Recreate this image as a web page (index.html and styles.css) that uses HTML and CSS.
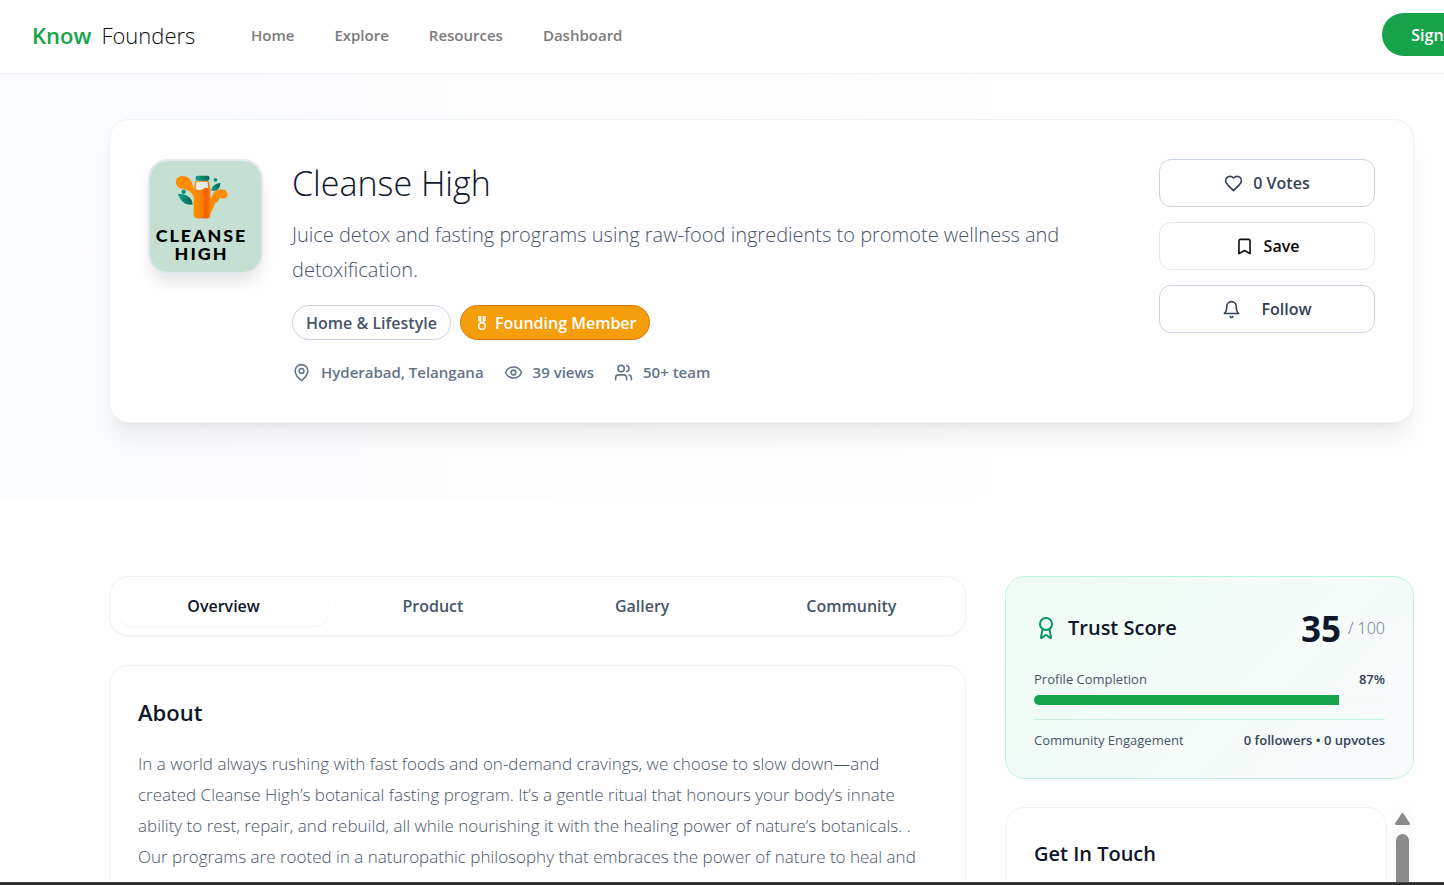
FILE: index.html
```html
<!DOCTYPE html>
<html lang="en">
<head>
  <meta charset="UTF-8">
  <meta name="viewport" content="width=device-width, initial-scale=1.0">
  <title>Cleanse High - Know Founders</title>
  <link rel="stylesheet" href="styles.css">
</head>
<body>
  <header class="navbar">
    <a class="brand" href="#"><span class="brand-know">Know</span> <span>Founders</span></a>
    <nav class="nav-links">
      <a href="#">Home</a>
      <a href="#">Explore</a>
      <a href="#">Resources</a>
      <a href="#">Dashboard</a>
    </nav>
    <button class="sign-in">Sign In</button>
  </header>

  <main>
    <section class="hero">
      <div class="hero-card">
        <svg class="logo" viewBox="0 0 112 112" role="img" aria-label="Cleanse High logo">
          <defs>
            <linearGradient id="juice">
              <stop offset="0" stop-color="#ff9100"/>
              <stop offset="0.5" stop-color="#fb7d00"/>
              <stop offset="0.75" stop-color="#f05a00"/>
              <stop offset="1" stop-color="#fb8500"/>
            </linearGradient>
            <linearGradient id="leaf">
              <stop offset="0" stop-color="#14a085"/>
              <stop offset="1" stop-color="#046657"/>
            </linearGradient>
          </defs>
          <rect width="112" height="112" fill="#c5dfd2"/>
          <path d="M45 38C43 32 39 29 33 28C28 28 26 24 26 20C27 16 32 14 37 16C43 19 43 26 46 34Z" fill="#ff8c00"/>
          <path d="M60 38C65 35 63 30 69 29C75 27 79 31 78 35C77 38 73 38 71 37C69 38 70 41 66 42C64 45 64 50 60 53Z" fill="#ff8c00"/>
          <path d="M46 20H59L61 28V54Q61 58 57 58H48Q44 58 44 54V28Z" fill="url(#juice)"/>
          <path d="M47 21H58L59 28Q56 26 54 28Q50 31 46 28Z" fill="#e5eee6"/>
          <rect x="46" y="15" width="14" height="5" rx="2" fill="url(#leaf)"/>
          <path d="M28 33C35 33 43 36 43 44C36 45 31 41 28 33Z" fill="url(#leaf)"/>
          <path d="M62 30C62 25 66 23 71 22C71 27 68 31 62 30Z" fill="url(#leaf)"/>
          <circle cx="34" cy="31" r="2.2" fill="#0c9079"/>
          <circle cx="66" cy="19" r="1.9" fill="#0c9079"/>
          <text class="logo-text" x="52" y="82">CLEANSE</text>
          <text class="logo-text" x="52" y="100">HIGH</text>
        </svg>

        <div class="startup">
          <h1>Cleanse High</h1>
          <p class="tagline">Juice detox and fasting programs using raw-food ingredients to promote wellness and detoxification.</p>
          <div class="badges">
            <span class="badge">Home &amp; Lifestyle</span>
            <span class="badge badge-founding">
              <svg class="medal" viewBox="0 0 10 16" fill="none" stroke="#fff"><path d="M1 1h8v5L5 8L1 6Z" fill="#fff" fill-opacity=".8" stroke="none"/><path d="M5 1v6" stroke="#f59e0b"/><circle cx="5" cy="11" r="3.3" stroke-width="1.5"/></svg>
              Founding Member
            </span>
          </div>
          <ul class="meta">
            <li>
              <svg class="icon" viewBox="0 0 24 24"><path d="M20 10c0 4.993-5.539 10.193-7.399 11.799a1 1 0 0 1-1.202 0C9.539 20.193 4 14.993 4 10a8 8 0 0 1 16 0"/><circle cx="12" cy="10" r="3"/></svg>
              Hyderabad, Telangana
            </li>
            <li>
              <svg class="icon" viewBox="0 0 24 24"><path d="M2.062 12.348a1 1 0 0 1 0-.696 10.75 10.75 0 0 1 19.876 0 1 1 0 0 1 0 .696 10.75 10.75 0 0 1-19.876 0"/><circle cx="12" cy="12" r="3"/></svg>
              39 views
            </li>
            <li>
              <svg class="icon" viewBox="0 0 24 24"><path d="M16 21v-2a4 4 0 0 0-4-4H6a4 4 0 0 0-4 4v2"/><circle cx="9" cy="7" r="4"/><path d="M22 21v-2a4 4 0 0 0-3-3.87M16 3.13a4 4 0 0 1 0 7.75"/></svg>
              50+ team
            </li>
          </ul>
        </div>

        <div class="actions">
          <button class="action">
            <svg class="icon" viewBox="0 0 24 24"><path d="M19 14c1.49-1.46 3-3.21 3-5.5A5.5 5.5 0 0 0 16.5 3c-1.76 0-3 .5-4.5 2-1.5-1.5-2.74-2-4.5-2A5.5 5.5 0 0 0 2 8.5c0 2.3 1.5 4.05 3 5.5l7 7Z"/></svg>
            0 Votes
          </button>
          <button class="action action-save">
            <svg class="icon" viewBox="0 0 24 24"><path d="m19 21-7-4-7 4V5a2 2 0 0 1 2-2h10a2 2 0 0 1 2 2v16z"/></svg>
            Save
          </button>
          <button class="action action-follow">
            <svg class="icon" viewBox="0 0 24 24"><path d="M6 8a6 6 0 0 1 12 0c0 7 3 9 3 9H3s3-2 3-9"/><path d="M10.3 21a1.94 1.94 0 0 0 3.4 0"/></svg>
            Follow
          </button>
        </div>
      </div>
    </section>

    <div class="content">
      <div class="main-column">
        <div class="tabs" role="tablist">
          <button class="tab active" role="tab" aria-selected="true">Overview</button>
          <button class="tab" role="tab">Product</button>
          <button class="tab" role="tab">Gallery</button>
          <button class="tab" role="tab">Community</button>
        </div>
        <section class="card">
          <h2>About</h2>
          <p class="about-text">In a world always rushing with fast foods and on-demand cravings, we choose to slow down—and<br>created Cleanse High’s botanical fasting program. It’s a gentle ritual that honours your body’s innate<br>ability to rest, repair, and rebuild, all while nourishing it with the healing power of nature’s botanicals. .<br>Our programs are rooted in a naturopathic philosophy that embraces the power of nature to heal and<br>restore. We believe the body has an incredible capacity to restore itself when put in a fasting state and</p>
        </section>
      </div>

      <aside class="sidebar">
        <section class="trust">
          <div class="trust-head">
            <svg class="icon award" viewBox="0 0 24 24"><path d="m15.477 12.89 1.515 8.526a.5.5 0 0 1-.81.47l-3.58-2.687a1 1 0 0 0-1.197 0l-3.586 2.686a.5.5 0 0 1-.81-.469l1.514-8.526"/><circle cx="12" cy="8" r="6"/></svg>
            <h2>Trust Score</h2>
            <strong>35</strong>
            <span class="out-of">/ 100</span>
          </div>
          <div class="trust-row"><span>Profile Completion</span><b>87%</b></div>
          <div class="progress"><div class="progress-fill" style="width: 87%"></div></div>
          <div class="trust-row engagement"><span>Community Engagement</span><b>0 followers • 0 upvotes</b></div>
        </section>
        <div class="contact-scroll">
          <section class="card">
            <h2>Get In Touch</h2>
          </section>
          <div class="scrollbar">
            <svg viewBox="0 0 14 11"><path d="M7 1L13 10H1Z" fill="#8b8b8b" stroke="#8b8b8b" stroke-width="2" stroke-linejoin="round"/></svg>
            <div class="thumb"></div>
          </div>
        </div>
      </aside>
    </div>
  </main>
  <div class="bottom-edge"></div>
</body>
</html>
```
FILE: styles.css
```css
* {
  box-sizing: border-box;
}

body {
  margin: 0;
  height: 100vh;
  display: flex;
  flex-direction: column;
  overflow: hidden;
  font-family: "Open Sans", "Noto Sans", sans-serif;
  font-size: 16px;
  color: #0f172a;
  background: #fefefe;
}

h1, h2, p, ul {
  margin: 0;
  padding: 0;
}

button {
  font: inherit;
  cursor: pointer;
}

a {
  color: inherit;
  text-decoration: none;
}

/* Header */
.navbar {
  flex: none;
  display: flex;
  align-items: center;
  height: 74px;
  padding: 0 0 4px 32px;
  background: #fff;
  border-bottom: 1px solid #f0f0f2;
}

.brand {
  display: flex;
  gap: 10px;
  width: 219px;
  font-size: 22px;
  font-weight: 300;
  color: #0a0a0a;
}

.brand-know {
  font-weight: 600;
  color: #16a34a;
}

.nav-links {
  display: flex;
  gap: 40px;
  font-size: 15px;
  font-weight: 600;
  color: #7b7b7b;
}

.sign-in {
  flex: none;
  width: 110px;
  height: 43px;
  margin: 0 -48px 0 auto;
  border: 0;
  border-radius: 22px;
  background: #16a34a;
  color: #fff;
  font-size: 16px;
  font-weight: 600;
}

main {
  flex: 1;
  min-height: 0;
  overflow: hidden;
}

/* Hero */
.hero {
  padding: 45px 30px 77px 109px;
  background: linear-gradient(90deg, #fafbfd, #fefefe 70%);
}

.hero-card {
  display: flex;
  align-items: flex-start;
  min-height: 304px;
  padding: 39px 38px 37px;
  background: #fefefe;
  border: 1px solid #eef1f5;
  border-radius: 20px;
  box-shadow: 0 20px 25px -5px rgba(0, 0, 0, 0.06), 0 8px 10px -6px rgba(0, 0, 0, 0.06);
}

.logo {
  flex: none;
  width: 115px;
  height: 115px;
  border: 2px solid #e2e8f0;
  border-radius: 20px;
  box-shadow: 0 10px 15px -3px rgba(0, 0, 0, 0.1);
}

.logo-text {
  font-family: Lato, sans-serif;
  font-size: 18px;
  font-weight: 900;
  letter-spacing: 2px;
  text-anchor: middle;
}

.startup {
  flex: 1;
  margin-left: 29px;
}

h1 {
  font-size: 34px;
  font-weight: 300;
  line-height: 48px;
}

.tagline {
  max-width: 800px;
  margin-top: 10px;
  font-size: 20px;
  font-weight: 300;
  line-height: 35px;
  color: #475569;
}

.badges {
  display: flex;
  gap: 9px;
  margin-top: 18px;
}

.badge {
  display: flex;
  align-items: center;
  height: 35px;
  padding: 0 13px;
  border: 1px solid #cbd5e1;
  border-radius: 18px;
  font-size: 16px;
  font-weight: 600;
  color: #475569;
}

.badge-founding {
  gap: 8px;
  border-color: #d97706;
  background: #f59e0b;
  color: #fff;
}

.medal {
  width: 10px;
  height: 16px;
  margin-left: 3px;
}

.meta {
  display: flex;
  gap: 20px;
  margin-top: 20px;
  list-style: none;
  font-size: 15px;
  font-weight: 600;
  line-height: 24px;
  color: #64748b;
}

.meta li {
  display: flex;
  align-items: center;
  gap: 10px;
}

.icon {
  flex: none;
  width: 19px;
  height: 19px;
  fill: none;
  stroke: currentColor;
  stroke-width: 2;
  stroke-linecap: round;
  stroke-linejoin: round;
}

.actions {
  flex: none;
  display: flex;
  flex-direction: column;
  gap: 15px;
  width: 216px;
}

.action {
  display: flex;
  align-items: center;
  justify-content: center;
  gap: 10px;
  height: 48px;
  border: 1px solid #cbd5e1;
  border-radius: 12px;
  background: #fff;
  color: #334155;
  font-size: 16px;
  font-weight: 600;
}

.action-save {
  border-color: #e5e7eb;
  color: #0a0a0a;
}

.action-follow {
  gap: 20px;
}

/* Content */
.content {
  display: grid;
  grid-template-columns: minmax(0, 857fr) minmax(0, 409fr);
  gap: 39px;
  padding: 76px 30px 0 109px;
}

.tabs {
  display: grid;
  grid-template-columns: repeat(4, 1fr);
  height: 60px;
  padding: 9px;
  border: 1px solid #f1f2f8;
  border-radius: 20px;
  background: #fff;
  box-shadow: 0 1px 2px rgba(0, 0, 0, 0.04);
}

.tab {
  border: 0;
  border-radius: 14px;
  background: none;
  font-size: 16px;
  font-weight: 600;
  color: #475569;
}

.tab.active {
  color: #0f172a;
  box-shadow: 0 1px 2px rgba(0, 0, 0, 0.05);
}

.card {
  min-height: 300px;
  padding: 28px;
  border: 1px solid #eff1f6;
  border-radius: 20px;
  background: #fff;
}

.main-column .card {
  margin-top: 29px;
}

h2 {
  font-size: 22px;
  font-weight: 600;
  line-height: 36px;
}

.sidebar h2 {
  font-size: 20px;
}

.about-text {
  margin-top: 18px;
  font-size: 17px;
  font-weight: 300;
  line-height: 31px;
  color: #475569;
}

.trust {
  height: 203px;
  padding: 28px;
  border: 1px solid #bbf7d9;
  border-radius: 20px;
  background: linear-gradient(135deg, #effdf5, #f8fafc);
}

.trust-head {
  display: flex;
  align-items: center;
  height: 46px;
  margin-bottom: 18px;
}

.award {
  width: 24px;
  height: 24px;
  color: #059669;
}

.trust h2 {
  margin-left: 10px;
}

.trust strong {
  margin-left: auto;
  font-size: 35px;
}

.out-of {
  margin-left: 7px;
  font-size: 16px;
  font-weight: 300;
  color: #64748b;
}

.trust-row {
  display: flex;
  justify-content: space-between;
  font-size: 13px;
  line-height: 20px;
  color: #475569;
}

.trust-row b {
  font-weight: 600;
  color: #334155;
}

.progress {
  height: 10px;
  margin-top: 6px;
  border-radius: 5px;
  background: #f8fafa;
  overflow: hidden;
}

.progress-fill {
  height: 100%;
  background: #16a34a;
}

.engagement {
  margin-top: 14px;
  padding-top: 10px;
  border-top: 1px solid #c9f3e1;
}

.contact-scroll {
  display: flex;
  gap: 4px;
  margin-top: 28px;
}

.contact-scroll .card {
  flex: 1;
}

.scrollbar {
  width: 23px;
  padding: 6px 4px;
  background: #fcfcfc;
}

.scrollbar svg {
  display: block;
  width: 15px;
  height: 12px;
}

.thumb {
  width: 13px;
  height: 200px;
  margin: 9px 1px 0;
  border-radius: 7px;
  background: #8b8b8b;
}

.bottom-edge {
  flex: none;
  height: 3px;
  background: #2b2b2b;
  border-top: 1px solid #444;
}
```
